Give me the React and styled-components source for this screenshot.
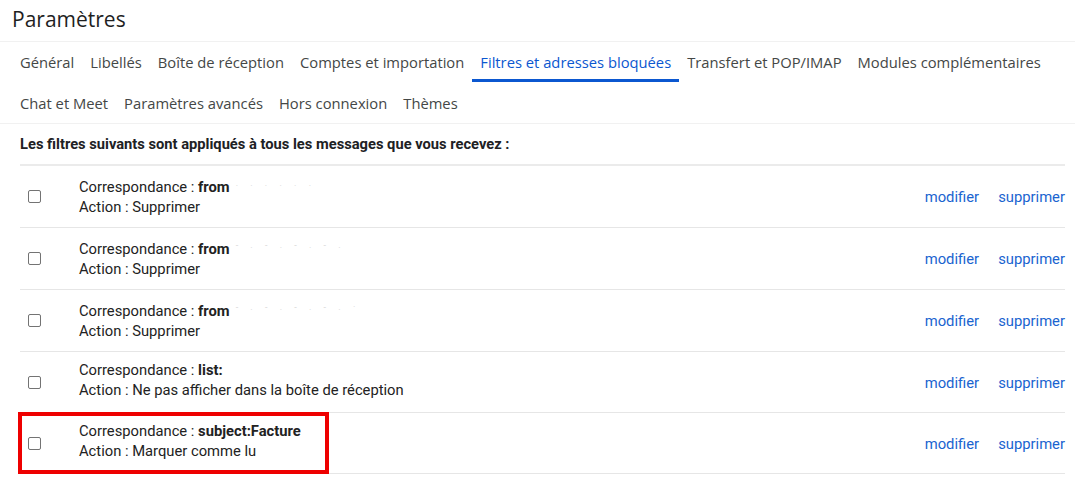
import React from "react";
import styled, { createGlobalStyle } from "styled-components";

const GlobalStyle = createGlobalStyle`
  body {
    margin: 0;
    background: #fff;
    font-family: Roboto, "Liberation Sans", Arial, sans-serif;
    color: #202124;
  }
`;

const Page = styled.div`
  width: 1075px;
`;

const Title = styled.h1`
  margin: 0;
  padding: 4px 12px 0;
  height: 37px;
  font-family: "Open Sans", Roboto, sans-serif;
  font-weight: 400;
  font-size: 21px;
  line-height: 30px;
  color: #1f1f1f;
  border-bottom: 1px solid #f1f1f1;
`;

const Tabs = styled.nav`
  padding: 0 12px;
  border-bottom: 1px solid #f1f1f1;
`;

const TabRow = styled.div`
  display: flex;
  height: ${p => p.$h}px;
  align-items: stretch;
`;

const Tab = styled.div`
  padding: 3px 8px 0;
  display: flex;
  align-items: center;
  font-family: "Open Sans", Roboto, sans-serif;
  font-size: 14.75px;
  color: ${p => (p.$active ? "#0b57d0" : "#444746")};
  border-bottom: 3px solid ${p => (p.$active ? "#0b57d0" : "transparent")};
  box-sizing: border-box;
`;

const Intro = styled.div`
  padding: 12px 20px 11px;
  font-size: 14.7px;
  font-weight: 700;
  line-height: 17px;
  color: #202124;
`;

const List = styled.div`
  margin: 0 10px 0 20px;
  border-top: 2px solid #ebebeb;
`;

const Row = styled.div`
  position: relative;
  display: flex;
  align-items: center;
  height: ${p => p.$h}px;
  border-bottom: 1px solid #e6e6e6;
`;

const Check = styled.span`
  width: 11px;
  height: 11px;
  margin-left: 8px;
  border: 1px solid #737373;
  border-radius: 2px;
  box-sizing: content-box;
`;

const Text = styled.div`
  margin-left: 38px;
  padding-bottom: 4px;
  flex: 1;
  font-size: 14.75px;
  line-height: 20px;
  color: #222;
`;

const Value = styled.b`
  font-weight: 700;
`;

const Redacted = styled.span`
  color: #d8d8d8;
  font-size: 9px;
  letter-spacing: 5px;
  vertical-align: 6px;
  margin-left: 6px;
`;

const Links = styled.div`
  display: flex;
  gap: 19px;
  padding-top: 1px;
`;

const Link = styled.a`
  font-size: 14.8px;
  color: #1a64d0;
  text-decoration: none;
  cursor: pointer;
`;

const Highlight = styled.div`
  position: absolute;
  left: -2px;
  top: -1px;
  width: 311px;
  height: 62px;
  border: 4px solid #ee0000;
  box-sizing: border-box;
  pointer-events: none;
`;

const tabRows = [
  ["Général", "Libellés", "Boîte de réception", "Comptes et importation", "Filtres et adresses bloquées", "Transfert et POP/IMAP", "Modules complémentaires"],
  ["Chat et Meet", "Paramètres avancés", "Hors connexion", "Thèmes"],
];

const filters = [
  { match: "from", action: "Supprimer", hidden: ". . . . . ." },
  { match: "from", action: "Supprimer", hidden: "- . - . - . - ." },
  { match: "from", action: "Supprimer", hidden: "- . - . - . - . ·" },
  { match: "list:", action: "Ne pas afficher dans la boîte de réception" },
  { match: "subject:Facture", action: "Marquer comme lu", marked: true },
];

export default function App() {
  return (
    <Page>
      <GlobalStyle />
      <Title>Paramètres</Title>
      <Tabs>
        {tabRows.map((row, i) => (
          <TabRow key={i} $h={i === 0 ? 40 : 41}>
            {row.map(t => (
              <Tab key={t} $active={t === "Filtres et adresses bloquées"}>{t}</Tab>
            ))}
          </TabRow>
        ))}
      </Tabs>
      <Intro>Les filtres suivants sont appliqués à tous les messages que vous recevez :</Intro>
      <List>
        {filters.map((f, i) => (
          <Row key={i} $h={i < 3 ? 61 : 60}>
            <Check />
            <Text>
              <div>
                Correspondance : <Value>{f.match}</Value>
                {f.hidden && <Redacted>{f.hidden}</Redacted>}
              </div>
              <div>Action : {f.action}</div>
            </Text>
            <Links>
              <Link>modifier</Link>
              <Link>supprimer</Link>
            </Links>
            {f.marked && <Highlight />}
          </Row>
        ))}
      </List>
    </Page>
  );
}
